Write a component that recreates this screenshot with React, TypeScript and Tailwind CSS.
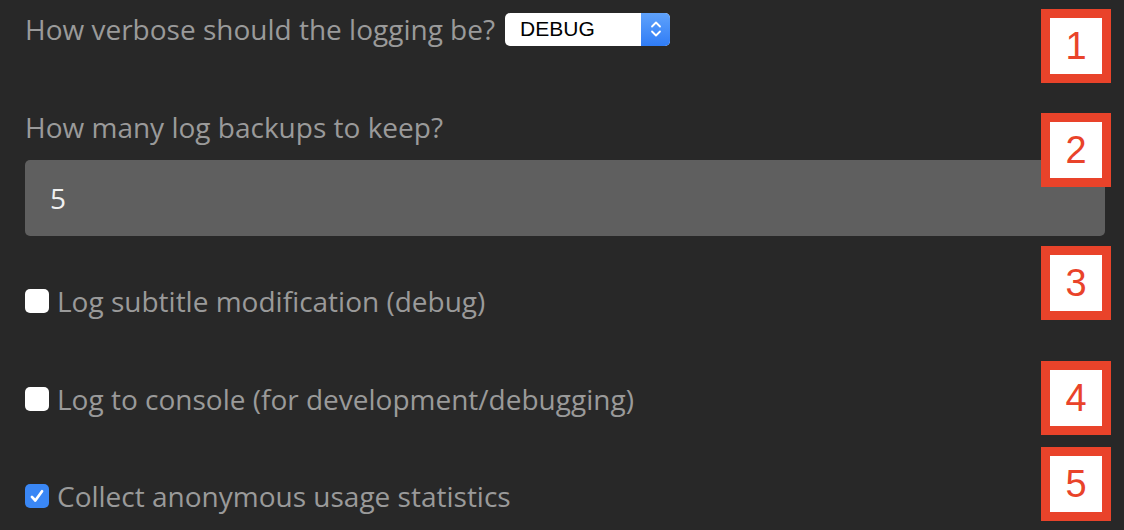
import React from 'react';

const Badge: React.FC<{ n: number; top: string }> = ({ n, top }) => (
  <div
    className={`absolute left-[1041px] ${top} w-[70px] h-[74px] border-[9px] border-[#e9432a] bg-white flex items-center justify-center text-[#e9432a] text-[38px] leading-none`}
    style={{ fontFamily: '"Liberation Sans", Arial, sans-serif' }}
  >
    {n}
  </div>
);

const Check: React.FC<{ checked?: boolean }> = ({ checked }) =>
  checked ? (
    <span className="w-[24px] h-[24px] rounded-[5px] bg-[#3a87f5] flex items-center justify-center shrink-0">
      <svg viewBox="0 0 16 16" className="w-[18px] h-[18px]" fill="none" stroke="white" strokeWidth="2.4" strokeLinecap="round" strokeLinejoin="round">
        <path d="M3.5 8.8l3 3.2L12.5 3.8" />
      </svg>
    </span>
  ) : (
    <span className="w-[24px] h-[24px] rounded-[5px] bg-white shrink-0" />
  );

const App: React.FC = () => {
  return (
    <div
      className="relative w-[1124px] h-[530px] bg-[#282828] text-[#9a9a9a] overflow-hidden"
      style={{ fontFamily: '"Open Sans", sans-serif' }}
    >
      <div className="pl-[25px] pr-[19px] text-[28px]">
        <div className="h-[58px] flex items-center gap-[10px]">
          <span>How verbose should the logging be?</span>
          <div className="w-[165px] h-[33px] rounded-[5px] bg-white flex overflow-hidden">
            <span
              className="flex-1 pl-[15px] flex items-center text-black text-[21px]"
              style={{ fontFamily: '"Liberation Sans", Arial, sans-serif' }}
            >
              DEBUG
            </span>
            <span className="w-[29px] bg-gradient-to-b from-[#5fa2fb] to-[#2f7cf6] flex items-center justify-center">
              <svg viewBox="0 0 12 20" className="w-[12px] h-[20px]" fill="none" stroke="white" strokeWidth="1.8" strokeLinecap="round" strokeLinejoin="round">
                <path d="M2 7.5L6 3.5l4 4" />
                <path d="M2 12.5l4 4 4-4" />
              </svg>
            </span>
          </div>
        </div>

        <div className="mt-[47px] h-[44px] flex items-center">How many log backups to keep?</div>
        <div className="mt-[11px] h-[76px] rounded-[5px] bg-[#5f5f5f] flex items-center pl-[25px] text-[#f0f0f0] text-[28px]">
          5
        </div>

        <div className="mt-[45px] h-[40px] flex items-center gap-[8px]">
          <Check />
          <span>Log subtitle modification (debug)</span>
        </div>
        <div className="mt-[58px] h-[40px] flex items-center gap-[8px]">
          <Check />
          <span>Log to console (for development/debugging)</span>
        </div>
        <div className="mt-[57px] h-[40px] flex items-center gap-[8px]">
          <Check checked />
          <span>Collect anonymous usage statistics</span>
        </div>
      </div>

      <Badge n={1} top="top-[9px]" />
      <Badge n={2} top="top-[113px]" />
      <Badge n={3} top="top-[246px]" />
      <Badge n={4} top="top-[361px]" />
      <Badge n={5} top="top-[447px]" />
    </div>
  );
};

export default App;
